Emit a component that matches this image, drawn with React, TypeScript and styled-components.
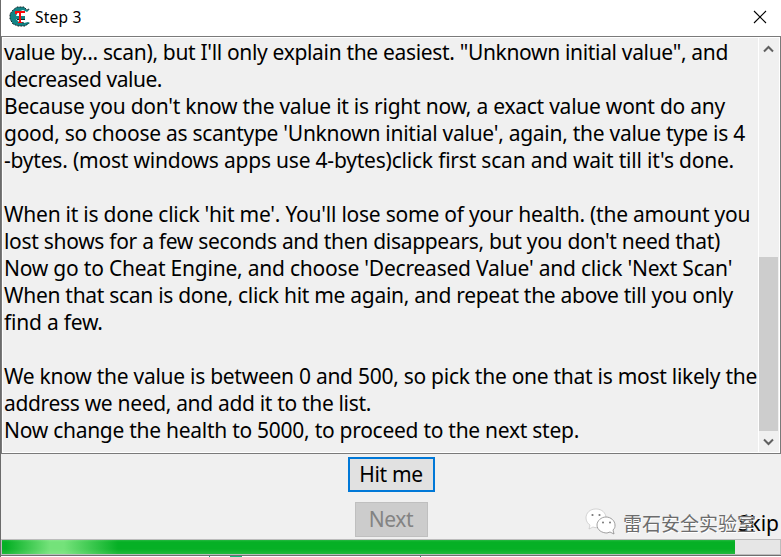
import React from 'react';
import styled, { createGlobalStyle } from 'styled-components';

const Global = createGlobalStyle`
  * { box-sizing: border-box; }
  html, body { margin: 0; background: #6f6f6f; overflow: hidden; }
  body { font-family: "Noto Sans", "Noto Sans CJK SC", sans-serif; color: #000; }
`;
const Window = styled.div`
  position: relative;
  width: 781px; height: 557px;
  padding-left: 1px;
  display: flex; flex-direction: column;
  background: #f0f0f0;
  box-shadow: inset 1px 0 #6b6b6b;
`;
const TitleBar = styled.header`
  height: 36px; flex: none;
  display: flex; align-items: center;
  padding: 0 14px 2px 8px;
  background: #fff;
`;
const Title = styled.span`
  flex: 1;
  margin-left: 4px;
  font-size: 15.5px; line-height: 20px; letter-spacing: 0.2px;
`;
const Memo = styled.main`
  height: 418px; flex: none;
  display: flex;
  border: 1px solid #7a7a7a;
  box-shadow: inset 0 0 0 1px #fff;
  padding: 1px;
`;
const Copy = styled.div`
  flex: 1; min-width: 0;
  padding: 1px 0 0 1px;
  font-size: 21px;
`;
const Line = styled.div<{ $tracking: number }>`
  height: 27px;
  line-height: 27px;
  white-space: nowrap;
  letter-spacing: ${p => p.$tracking}px;
`;
const ScrollBar = styled.div`
  width: 21px; flex: none;
  display: flex; flex-direction: column; align-items: stretch;
  border-left: 1px solid #fff; border-right: 1px solid #f0f0f0;
`;
const Arrow = styled.div`
  height: 21px; flex: none;
  display: flex; align-items: center; justify-content: center;
`;
const Track = styled.div`
  flex: 1;
  display: flex; align-items: flex-end;
`;
const Thumb = styled.div`
  width: 100%; height: 174px;
  background: #cdcdcd;
`;
const Actions = styled.div`
  height: 85px; flex: none;
  display: flex; flex-direction: column; align-items: center;
  padding-top: 3px; gap: 10px;
`;
const Button = styled.button<{ $w: number; $muted?: boolean }>`
  width: ${p => p.$w}px; height: 35px;
  padding: 0;
  font: 21px/29px "Noto Sans", sans-serif;
  letter-spacing: -0.35px;
  border: ${p => (p.$muted ? '1px solid #bfbfbf' : '2px solid #0078d7')};
  background: ${p => (p.$muted ? '#cccccc' : '#e1e1e1')};
  color: ${p => (p.$muted ? '#838383' : '#000')};
`;
const Progress = styled.div`
  height: 16px; flex: none;
  padding: 1px;
  background: #e6e6e6;
  box-shadow: inset 0 0 0 1px #bcbcbc;
`;
const Fill = styled.div`
  width: 733px; height: 14px;
  background:
    linear-gradient(to bottom, rgba(255,255,255,.12), transparent 2px 9px, rgba(255,255,255,.11)),
    linear-gradient(90deg, #06b025 4px, #74e27a 48px, #74e27a 62px, #06b025 116px);
`;
const Edge = styled.div`
  height: 2px; flex: none;
  border-top: 1px solid #6f6f6f;
  background: linear-gradient(90deg, #fff 208px, #16a06c 208px 209px, #fff 209px 229px, #14b87a 229px 241px, #fff 241px 419px, #16a06c 419px 420px, #fff 420px);
`;
const Skip = styled.span`
  position: absolute; right: 2px; top: 509px;
  font-size: 21px; line-height: 28px;
`;
const Watermark = styled.div`
  position: absolute; left: 585px; top: 508px;
  display: flex; align-items: center; gap: 7px;
`;
const WatermarkText = styled.span`
  font: 19px/27px "Noto Sans CJK SC", sans-serif;
  color: #6c6c6c;
  text-shadow: 1px 1px 0 #fff;
`;

const lines: [string, number][] = [
  ["value by... scan), but I'll only explain the easiest. \"Unknown initial value\", and", -0.331],
  ['decreased value.', -0.457],
  ["Because you don't know the value it is right now, a exact value wont do any", -0.243],
  ["good, so choose as scantype 'Unknown initial value', again, the value type is 4", -0.276],
  ["-bytes. (most windows apps use 4-bytes)click first scan and wait till it's done.", -0.204],
  ['', 0],
  ["When it is done click 'hit me'. You'll lose some of your health. (the amount you", -0.235],
  ["lost shows for a few seconds and then disappears, but you don't need that)", -0.3],
  ["Now go to Cheat Engine, and choose 'Decreased Value' and click 'Next Scan'", -0.215],
  ['When that scan is done, click hit me again, and repeat the above till you only', -0.29],
  ['find a few.', -0.22],
  ['', 0],
  ['We know the value is between 0 and 500, so pick the one that is most likely the', -0.27],
  ['address we need, and add it to the list.', -0.329],
  ['Now change the health to 5000, to proceed to the next step.', -0.271],
];

const Logo = () => (
  <svg width="22" height="22" viewBox="0 0 22 22">
    <path d="M21 3L18 4L15 1L8 1L4 4L1 8V13L4 18L9 20H16L21 17L19 16L15 17L10 16L7 13H16V10H7L9 6L14 4L18 6Z" fill="#138486" />
    <path d="M20 3L18 4L15 1L8 1L4 4L1 8V13L4 18L9 20H16L20 17" fill="none" stroke="#17282b" strokeWidth="1" strokeDasharray="2 1" />
    <path d="M8 13.500H16M10 16L15 17" stroke="#17282b" strokeWidth="1" />
    <path d="M6 5H16V7H12V16H13V17H9V16H10V7H8V8H6Z" fill="#fc0808" shapeRendering="crispEdges" />
  </svg>
);

const Chevron = ({ d }: { d: string }) => (
  <svg width="11" height="8" viewBox="0 0 11 8">
    <path d={d} fill="none" stroke="#606060" strokeWidth="2" />
  </svg>
);

export default function App() {
  return (
    <>
      <Global />
      <Window>
        <TitleBar>
          <Logo />
          <Title>Step 3</Title>
          <svg width="14" height="14" viewBox="0 0 14 14"><path d="M1 1L13 13M13 1L1 13" stroke="#000" strokeWidth="1.1" /></svg>
        </TitleBar>
        <Memo>
          <Copy>{lines.map(([text, tracking], i) => <Line key={i} $tracking={tracking}>{text}</Line>)}</Copy>
          <ScrollBar>
            <Arrow><Chevron d="M1 6.5L5.5 2L10 6.500" /></Arrow>
            <Track><Thumb /></Track>
            <Arrow><Chevron d="M1 1.500L5.500 6L10 1.500" /></Arrow>
          </ScrollBar>
        </Memo>
        <Actions>
          <Button $w={87}>Hit me</Button>
          <Button $w={73} $muted disabled>Next</Button>
        </Actions>
        <Progress><Fill /></Progress>
        <Edge />
        <Skip>Skip</Skip>
        <Watermark>
          <svg width="31" height="28" viewBox="0 0 31 28">
            <path d="M11 1C4.800 1 1 5 1 10C1 13 3 16 5 17L4 21L8 19C10 20 15 20 17 18C20 16 21 14 21 10C21 5 17 1 11 1Z" fill="#fff" stroke="#bbb" strokeWidth=".6" />
            <path d="M21 9C16 9 12 13 12 17C12 22 17 25 22 25L25 24L29 26L28 22C30 20 30 19 30 17C30 13 26 9 21 9Z" fill="#fff" stroke="#888" strokeWidth=".8" />
            <g fill="#777"><circle cx="7.500" cy="7" r="1.100" /><circle cx="14.500" cy="7" r="1.100" /><circle cx="18" cy="14.500" r="1" /><circle cx="25" cy="14.500" r="1" /></g>
          </svg>
          <WatermarkText>雷石安全实验室</WatermarkText>
        </Watermark>
      </Window>
    </>
  );
}
